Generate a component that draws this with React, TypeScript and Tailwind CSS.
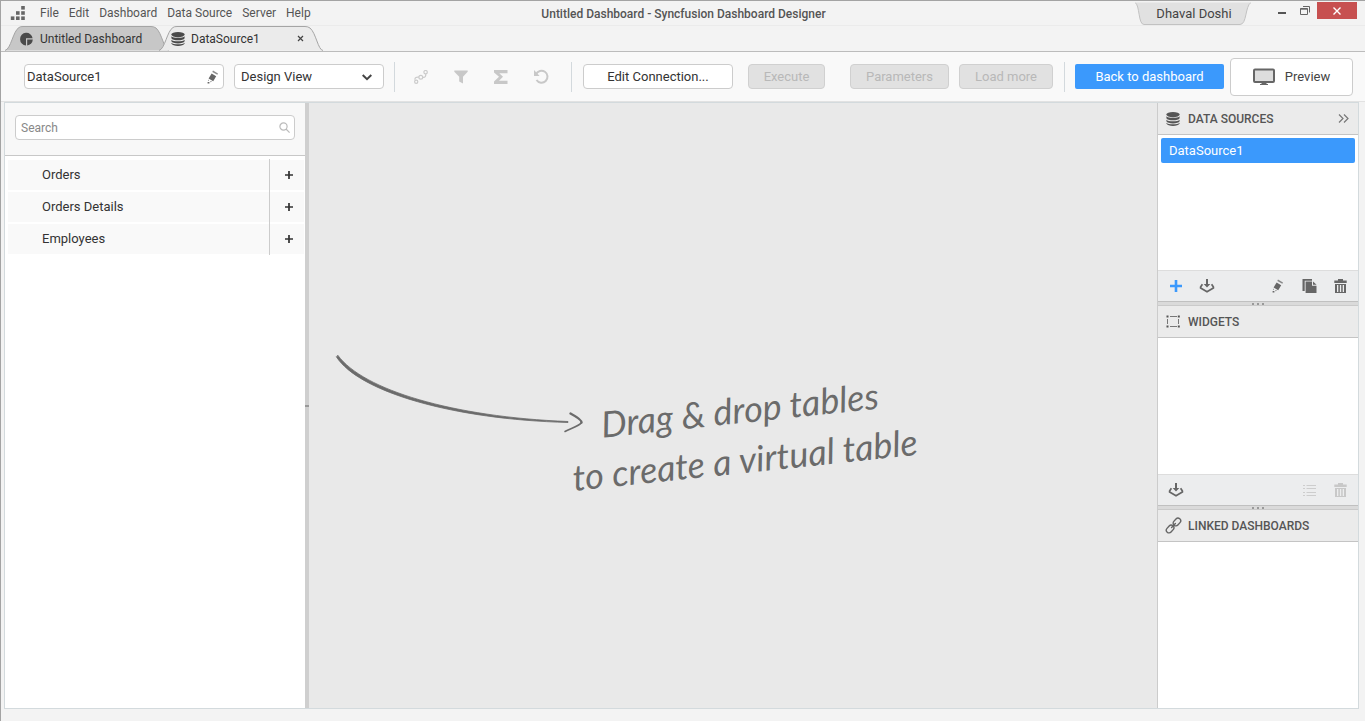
import React from "react";

type IconProps = { className?: string };

const LogoIcon = () => (
  <svg width="16" height="16" viewBox="0 0 16 16" fill="#666" aria-hidden="true">
    <rect x="11.2" y="1" width="3.6" height="3.6" />
    <rect x="6" y="6.2" width="3.6" height="3.6" />
    <rect x="11.2" y="6.200" width="3.6" height="3.6" />
    <rect x=".8" y="11.4" width="3.6" height="3.6" />
    <rect x="6" y="11.4" width="3.6" height="3.6" />
    <rect x="11.2" y="11.4" width="3.6" height="3.6" />
  </svg>
);

const PieIcon = () => (
  <svg width="14" height="14" viewBox="0 0 14 14" fill="#4a4a4a" aria-hidden="true">
    <path d="M12.6 6.2A6.3 6.3 0 1 0 6 13.4V6.2z" />
    <path d="M7.2 7.6h5.6a6 6 0 0 1-5.6 5.8z" />
  </svg>
);

const DatabaseIcon = ({ className }: IconProps) => (
  <svg width="14" height="14" viewBox="0 0 14 14" className={className} fill="currentColor" aria-hidden="true">
    <ellipse cx="7" cy="2.6" rx="6.6" ry="2.6" />
    <path d="M.4 4.2C1.8 6.4 12.2 6.4 13.6 4.2v2c-1 2.8-12.2 2.8-13.2 0z" />
    <path d="M.4 7.7c1.4 2.2 11.8 2.2 13.2 0v1.6c-1 2.8-12.2 2.8-13.2 0z" />
    <path d="M.4 10.7c1.4 2.2 11.8 2.2 13.2 0v.9c-1 3.1-12.2 3.1-13.2 0z" />
  </svg>
);

const PencilIcon = () => (
  <svg width="12" height="14" viewBox="0 0 12 14" fill="#666" aria-hidden="true">
    <path d="M4.6 3.6l4.6 2.6-3 5-4.6-2.7z" />
    <path d="M6 .6l5 2.900-.7 1.300-5-2.900z" opacity=".75" />
    <path d="M1 9.4l1 1.2-.8.5zM3.500 11l1.500.8-1.600.5zM.6 12h1.800v1.600H.6z" />
  </svg>
);

const NodesIcon = () => (
  <svg width="14" height="14" viewBox="0 0 14 14" fill="none" stroke="#cbcbcb" strokeWidth="1.2" aria-hidden="true">
    <circle cx="2.2" cy="11.8" r="1.6" />
    <circle cx="6.8" cy="7.2" r="1.9" />
    <circle cx="11.6" cy="2.2" r="1.7" />
    <path d="M.9 9.7C.8 7.8 2.2 6.8 4.9 7.2M8.7 7.4c2.5.3 3.3-1 3-3.4" />
  </svg>
);

const FunnelIcon = () => (
  <svg width="14" height="14" viewBox="0 0 14 14" fill="#c8c8c8" aria-hidden="true">
    <path d="M.3.5h13.4v1.2L9 6.8v6.7l-3.8-2V6.8L.3 1.7z" />
  </svg>
);

const SigmaIcon = () => (
  <svg width="16" height="14" viewBox="0 0 16 14" fill="#c8c8c8" aria-hidden="true">
    <path d="M1 0h13.5v3.2H6.3L10 6.7 6 10.8h8.5V14H1v-2.4l5-4.9-5-4.3z" />
  </svg>
);

const UndoIcon = () => (
  <svg width="16" height="15" viewBox="0 0 16 15" aria-hidden="true">
    <path d="M3 5.3A6 6 0 1 1 3.5 11" fill="none" stroke="#c8c8c8" strokeWidth="2" />
    <path d="M1 1v6h5.6z" fill="#c8c8c8" />
  </svg>
);

const DownloadIcon = () => (
  <svg width="16" height="14" viewBox="0 0 16 14" aria-hidden="true">
    <path d="M3.4 5.200L1.600 8v1L8 12.700 14.400 9V8l-1.800-2.800" fill="none" stroke="#666" strokeWidth="1.700" />
    <path d="M7 0h2v5h2.300L8 8.400 4.700 5H7z" fill="#666" />
  </svg>
);

const CopyIcon = () => (
  <svg width="15" height="14" viewBox="0 0 15 14" fill="#666" aria-hidden="true">
    <path d="M.5 0H10v1.7H2.7V12H.5z" />
    <path d="M3.6 2.6H10v4.2h4.5V14H3.6z" />
    <path d="M11 2.4l3.6 3.4H11z" />
  </svg>
);

const TrashIcon = ({ className }: IconProps) => (
  <svg width="13" height="14" viewBox="0 0 13 14" className={className} fill="currentColor" aria-hidden="true">
    <path d="M4 0h5v1.5h3.7V4H.3V1.5H4z" />
    <path fillRule="evenodd" d="M1 5h11v9H1zM3 6v7h1.3V6zM5.9 6v7h1.3V6zM8.7 6v7H10V6z" />
  </svg>
);

const ListIcon = () => (
  <svg width="13" height="13" viewBox="0 0 13 13" stroke="#cdcdcd" aria-hidden="true">
    <path d="M0 1.500h2M3.500 1.500H13M0 4.500h2M3.500 4.500H13M0 8.500h2M3.500 8.500H13M0 11.500h2M3.500 11.500H13" strokeWidth="1.2" />
  </svg>
);

const WidgetsIcon = () => (
  <svg width="15" height="13" viewBox="0 0 15 13" className="ml-px" aria-hidden="true">
    <path d="M4 1.500h7M4 11.500h7M1.500 4v5M12.500 4v5" stroke="#777" />
    <path d="M.5.5h2v2h-2zM11.800.5h2v2h-2zM.5 10.500h2v2h-2zM11.800 10.500h2v2h-2z" fill="#555" />
  </svg>
);

const LinkIcon = () => (
  <svg width="17" height="17" viewBox="0 0 17 17" fill="none" stroke="#666" strokeWidth="1.4" strokeLinecap="round" aria-hidden="true">
    <rect x="7.600" y="2.300" width="8.600" height="5.400" rx="2.700" transform="rotate(-48 11.900 5)" />
    <rect x=".8" y="9.300" width="8.600" height="5.400" rx="2.700" transform="rotate(-48 5.100 12)" />
    <path d="M6.600 10.400l3.800-4" />
  </svg>
);

const MonitorIcon = () => (
  <svg width="22" height="18" viewBox="0 0 22 18" aria-hidden="true">
    <rect x="1" y="1.5" width="20" height="12.5" rx="1" fill="#ddd" stroke="#666" strokeWidth="2" />
    <path d="M8.5 14h5v2H15v1H7v-1h1.5z" fill="#666" />
  </svg>
);

const PlusIcon = ({ className }: IconProps) => (
  <svg viewBox="0 0 12 12" className={className} stroke="currentColor" strokeWidth="2.6" aria-hidden="true">
    <path d="M6 0v12M0 6h12" />
  </svg>
);

const TabShape = ({ className }: IconProps) => (
  <svg className={className} viewBox="0 0 164 25" preserveAspectRatio="none" aria-hidden="true">
    <path
      d="M0 24.5C6 23 8 5 14 1.500Q15 .5 18 .5H146Q149 .5 151 2C157 7 159 24 164 24.500"
      stroke="#a5a5a5"
      vectorEffect="non-scaling-stroke"
    />
  </svg>
);

const Separator = () => <div className="h-[30px] w-px bg-[#d3d9dd]" />;

const IconButton = ({ label, disabled, children }: { label: string; disabled?: boolean; children: React.ReactNode }) => (
  <button type="button" aria-label={label} disabled={disabled} className="flex size-5 items-center justify-center">
    {children}
  </button>
);

const PanelHeader = ({ icon, title, children }: { icon: React.ReactNode; title: string; children?: React.ReactNode }) => (
  <div className="flex h-8 shrink-0 items-center border-b border-[#c4c4c4] bg-[#ebebeb] pr-[9px] pl-[7px]">
    <span className="flex w-[23px] items-center">{icon}</span>
    <h2 className="text-xs font-medium text-[#555]">{title}</h2>
    {children}
  </div>
);

const Splitter = () => (
  <div className="flex h-[5px] shrink-0 items-center justify-center gap-[3px] border-t border-b border-t-[#c0c0c0] border-b-[#cacaca] bg-[#dadada]">
    <i className="size-0.5 bg-[#999]" />
    <i className="size-0.5 bg-[#999]" />
    <i className="size-0.5 bg-[#999]" />
  </div>
);

const menus = ["File", "Edit", "Dashboard", "Data Source", "Server", "Help"];
const tables = ["Orders", "Orders Details", "Employees"];

export default function App() {
  return (
    <div className="flex h-screen min-h-[600px] flex-col border-t border-l border-[#a3a3a3] bg-[#f3f3f3] font-['Roboto',sans-serif] text-[13px] text-[#333]">
      <header className="flex h-[25px] shrink-0 items-center border-b border-[#ebebeb]">
        <div className="flex flex-1 items-center pl-[9px]">
          <LogoIcon />
          <nav className="ml-3.5 flex gap-2.5 text-xs whitespace-nowrap text-[#555]">
            {menus.map((m) => (
              <button key={m} type="button">{m}</button>
            ))}
          </nav>
        </div>
        <h1 className="pt-0.5 text-xs font-medium text-[#555]">Untitled Dashboard - Syncfusion Dashboard Designer</h1>
        <div className="flex h-full flex-1 items-start justify-end pt-px pr-2">
          <button type="button" className="relative h-[23px] w-[116px] pl-0.5 text-[13px] text-[#444]">
            <svg className="absolute inset-0 size-full" viewBox="0 0 116 23" preserveAspectRatio="none" aria-hidden="true">
              <path d="M0 .5C5 3 3 22.500 9 22.500H105C112 22.500 110 4 116 .5" fill="#e1e1e1" stroke="#c2c2c2" />
            </svg>
            <span className="relative">Dhaval Doshi</span>
          </button>
          <button type="button" aria-label="Minimize" className="ml-[26px] h-[17px] w-[9px]">
            <svg width="9" height="17" viewBox="0 0 9 17" aria-hidden="true"><path d="M1 11h8" stroke="#555" strokeWidth="2" /></svg>
          </button>
          <button type="button" aria-label="Restore" className="ml-3.5 h-[17px] w-[11px]">
            <svg width="11" height="17" viewBox="0 0 11 17" fill="none" stroke="#666" aria-hidden="true">
              <path d="M.5 6.500h7v6h-7zM0 7.200h8M3 4.500h6.500v6" />
            </svg>
          </button>
          <button type="button" aria-label="Close" className="ml-1.5 flex h-[17px] w-10 items-center justify-center bg-[#c75050]">
            <svg width="8" height="8" viewBox="0 0 8 8" stroke="#fff" strokeWidth="1.4" aria-hidden="true"><path d="M.5.5l7 7M7.5.5l-7 7" /></svg>
          </button>
        </div>
      </header>

      <div className="flex h-[26px] shrink-0 items-end border-b border-[#bcbcbc] pl-1 text-xs">
        <button type="button" className="relative flex h-[25px] w-[164px] items-center gap-1.5 pl-[15px] text-[#333]">
          <TabShape className="absolute inset-0 size-full fill-[#c7c7c7]" />
          <span className="relative"><PieIcon /></span>
          <span className="relative whitespace-nowrap">Untitled Dashboard</span>
        </button>
        <div className="relative -ml-2.5 flex h-[25px] w-[164px] items-center pl-3">
          <TabShape className="absolute inset-0 size-full fill-[#ebebeb]" />
          <button type="button" className="relative flex items-center gap-1.5">
            <DatabaseIcon className="text-[#4a4a4a]" />
            DataSource1
          </button>
          <button type="button" aria-label="Close tab" className="relative mr-[19px] ml-auto">
            <svg width="7" height="7" viewBox="0 0 7 7" stroke="#444" strokeWidth="1.2" aria-hidden="true"><path d="M1 1l5 5M6 1L1 6" /></svg>
          </button>
        </div>
      </div>

      <div className="flex h-[50px] shrink-0 items-center border-b border-[#e2e2e2] bg-[#f9f9f9] pr-3 pl-[23px]">
        <div className="relative w-[200px]">
          <input aria-label="Data source name" defaultValue="DataSource1" className="h-[25px] w-full rounded-sm border border-[#ccc] bg-white pr-6 pl-0.5 outline-none" />
          <button type="button" aria-label="Rename" className="absolute top-1.5 right-[5px]"><PencilIcon /></button>
        </div>
        <div className="relative ml-2.5 w-[150px]">
          <select aria-label="View" className="h-[25px] w-full appearance-none rounded-sm border border-[#ccc] bg-white pl-1.5 outline-none">
            <option>Design View</option>
          </select>
          <svg className="pointer-events-none absolute top-2.5 right-3" width="10" height="7" viewBox="0 0 10 7" fill="none" stroke="#444" strokeWidth="2" aria-hidden="true">
            <path d="M.7 1L5 5.2 9.3 1" />
          </svg>
        </div>
        <div className="ml-2.5 flex items-center">
          <Separator />
          <div className="mx-4 flex gap-5">
            <IconButton label="Joins" disabled><NodesIcon /></IconButton>
            <IconButton label="Filter" disabled><FunnelIcon /></IconButton>
            <IconButton label="Aggregate" disabled><SigmaIcon /></IconButton>
            <IconButton label="Refresh" disabled><UndoIcon /></IconButton>
          </div>
          <div className="ml-1"><Separator /></div>
        </div>
        <button type="button" className="ml-[11px] h-[25px] w-[150px] shrink-0 rounded-sm border border-[#ccc] bg-white">Edit Connection...</button>
        <button type="button" disabled className="ml-[15px] h-[25px] w-[77px] shrink-0 rounded-sm border border-[#d0d0d0] bg-[#e1e1e1] text-[#b8b8b8]">Execute</button>
        <button type="button" disabled className="ml-[25px] h-[25px] w-[99px] shrink-0 rounded-sm border border-[#d0d0d0] bg-[#e1e1e1] text-[#b8b8b8]">Parameters</button>
        <button type="button" disabled className="mr-2.5 ml-2.5 h-[25px] w-[94px] shrink-0 rounded-sm border border-[#d0d0d0] bg-[#e1e1e1] text-[#b8b8b8]">Load more</button>
        <div className="ml-auto flex items-center">
          <Separator />
          <button type="button" className="mr-1.5 ml-2.5 h-[25px] w-[149px] rounded-xs bg-[#3b99fc] text-white">Back to dashboard</button>
          <button type="button" className="flex h-[38px] w-[123px] items-center justify-center gap-2.5 rounded-sm border border-[#ccc] bg-white text-[#444]">
            <MonitorIcon />
            Preview
          </button>
        </div>
      </div>

      <main className="mr-1.5 mb-3 ml-[3px] flex min-h-0 flex-1 border border-[#d3dadd]">
        <aside className="flex w-[300px] shrink-0 flex-col bg-white">
          <div className="border-b border-[#c8c8c8] bg-[#f8f8f8] px-2.5 pt-3 pb-[15px]">
            <div className="relative">
              <input type="search" aria-label="Search tables" placeholder="Search" className="h-[25px] w-full rounded-sm border border-[#ccc] bg-white pr-6 pl-[5px] text-xs outline-none placeholder:text-[#888]" />
              <svg className="absolute top-[7px] right-[5px]" width="11" height="11" viewBox="0 0 11 11" fill="none" stroke="#bbb" strokeWidth="1.2" aria-hidden="true">
                <circle cx="4.5" cy="4.5" r="3.6" /><path d="M7 7l3.6 3.6" />
              </svg>
            </div>
          </div>
          <ul className="pt-[3px] pr-px pl-[3px]">
            {tables.map((t) => (
              <li key={t} className="flex h-8 items-stretch">
                <span className="my-px flex flex-1 items-center bg-[#f9f9f9] pl-[34px]">{t}</span>
                <span className="w-px bg-[#ccc]" />
                <button type="button" aria-label={"Add " + t} className="my-px flex w-[34px] items-center justify-center bg-[#f9f9f9] pl-1">
                  <PlusIcon className="size-2" />
                </button>
              </li>
            ))}
          </ul>
        </aside>
        <div className="flex w-1 shrink-0 items-center bg-[#cfcfcf]"><i className="h-0.5 w-full bg-[#999]" /></div>

        <section className="flex min-w-0 flex-1 items-center overflow-hidden bg-[#e9e9e9] pt-14 pl-[26px]">
          <svg width="250" height="80" viewBox="0 0 250 80" fill="none" stroke="#6b6b6b" strokeLinecap="round" className="-mt-20 shrink-0" aria-hidden="true">
            <path d="M3 1.500C28 36 118 63 233 67.500V68.500C118 65.500 24 38 1.500 3z" fill="#6b6b6b" strokeWidth=".8" strokeLinejoin="round" />
            <path d="M235.500 59.500C241 62.500 247 66.500 246.500 68.500" strokeWidth="2.400" />
            <path d="M246.500 68.500C244 72.500 235 74.500 230 77.500" strokeWidth="1.500" />
          </svg>
          <p className="-ml-4 shrink-0 -rotate-6 text-center font-['Lato',sans-serif] text-[36px] leading-[50px] whitespace-nowrap text-[#6b6b6b] italic">
            Drag &amp; drop tables
            <br />
            to create a virtual table
          </p>
        </section>

        <aside className="flex w-[201px] shrink-0 flex-col border-l border-[#ccc] bg-white">
          <PanelHeader icon={<DatabaseIcon className="ml-px text-[#555]" />} title="DATA SOURCES">
            <button type="button" aria-label="Collapse panel" className="ml-auto">
              <svg width="11" height="9" viewBox="0 0 11 9" fill="none" stroke="#777" strokeWidth="1.2" aria-hidden="true">
                <path d="M1 .5l4 4-4 4M6 .5l4 4-4 4" />
              </svg>
            </button>
          </PanelHeader>
          <div className="h-[135px] shrink-0 p-[3px]">
            <button type="button" className="h-[25px] w-full rounded-xs bg-[#3b99fc] pl-2 text-left text-white">DataSource1</button>
          </div>
          <div className="flex h-[31px] shrink-0 items-center border-t border-[#ddd] bg-[#ecedee] px-2">
            <IconButton label="Add data source"><PlusIcon className="size-3 text-[#3b99fc]" /></IconButton>
            <div className="ml-[11px]"><IconButton label="Import data source"><DownloadIcon /></IconButton></div>
            <div className="ml-auto flex gap-[11px]">
              <IconButton label="Edit"><PencilIcon /></IconButton>
              <IconButton label="Copy"><CopyIcon /></IconButton>
              <IconButton label="Delete"><TrashIcon className="text-[#666]" /></IconButton>
            </div>
          </div>
          <Splitter />
          <PanelHeader icon={<WidgetsIcon />} title="WIDGETS" />
          <div className="h-[136px] shrink-0" />
          <div className="flex h-[31px] shrink-0 items-center border-t border-[#ddd] bg-[#ecedee] px-2">
            <IconButton label="Import widget"><DownloadIcon /></IconButton>
            <div className="ml-auto flex gap-[11px]">
              <IconButton label="List" disabled><ListIcon /></IconButton>
              <IconButton label="Delete widget" disabled><TrashIcon className="text-[#c8c8c8]" /></IconButton>
            </div>
          </div>
          <Splitter />
          <PanelHeader icon={<LinkIcon />} title="LINKED DASHBOARDS" />
          <div className="flex-1" />
        </aside>
      </main>
    </div>
  );
}
